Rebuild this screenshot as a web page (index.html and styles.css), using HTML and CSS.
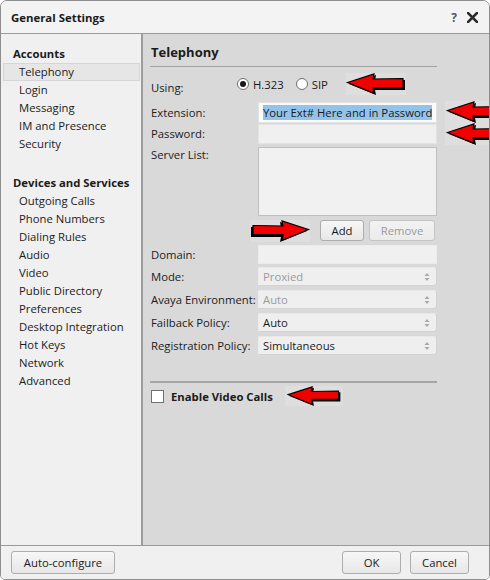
FILE: index.html
```html
<!DOCTYPE html>
<html>
<head>
<meta charset="utf-8">
<title>General Settings</title>
<link rel="stylesheet" href="styles.css">
</head>
<body>
<svg class="defs" width="0" height="0" aria-hidden="true">
  <symbol id="arrow" viewBox="0 0 60 22">
    <path d="M3,11 L30,2 L29,8 L59,7 L59,17 L29,17 L30,22 Z" fill="#000"/>
    <path d="M1.5,9.5 L28,1 L27,6 L57,5.5 L57,14.5 L27,14.5 L27.5,20 Z" fill="#f20000" stroke="#000" stroke-width="1.2" stroke-linejoin="miter"/>
  </symbol>
  <symbol id="spin" viewBox="0 0 6 10">
    <path d="M3,1 L5.5,4 L0.5,4 Z M3,9 L5.5,6 L0.5,6 Z" fill="#a9a9a9"/>
  </symbol>
</svg>
<div class="window">
  <header class="titlebar">
    <span class="title">General Settings</span>
    <span class="tb-icons">
      <span class="help">?</span>
      <svg class="close" viewBox="0 0 10 10" width="11" height="11"><path d="M1,1 L9,9 M9,1 L1,9" stroke="#2b2b2b" stroke-width="2.4" stroke-linecap="square"/></svg>
    </span>
  </header>
  <div class="main">
    <nav class="sidebar">
      <div class="group">Accounts</div>
      <div class="item selected">Telephony</div>
      <div class="item">Login</div>
      <div class="item">Messaging</div>
      <div class="item">IM and Presence</div>
      <div class="item">Security</div>
      <div class="group group2">Devices and Services</div>
      <div class="item">Outgoing Calls</div>
      <div class="item">Phone Numbers</div>
      <div class="item">Dialing Rules</div>
      <div class="item">Audio</div>
      <div class="item">Video</div>
      <div class="item">Public Directory</div>
      <div class="item">Preferences</div>
      <div class="item">Desktop Integration</div>
      <div class="item">Hot Keys</div>
      <div class="item">Network</div>
      <div class="item">Advanced</div>
    </nav>
    <section class="pane">
      <h2 class="pane-title">Telephony</h2>
      <div class="row row-using">
        <span class="lbl lbl-using">Using:</span>
        <span class="radio checked"></span><span class="radio-text">H.323</span>
        <span class="radio"></span><span class="radio-text">SIP</span>
        <svg class="arrow arrow-using"><use href="#arrow"/></svg>
      </div>
      <div class="row row-ext">
        <span class="lbl">Extension:</span>
        <div class="ctl inp inp-ext"><span class="sel-text">Your Ext# Here and in Password</span></div>
        <svg class="arrow arrow-side"><use href="#arrow"/></svg>
      </div>
      <div class="row row-pwd">
        <span class="lbl">Password:</span>
        <div class="ctl inp"></div>
        <svg class="arrow arrow-side"><use href="#arrow"/></svg>
      </div>
      <div class="row row-list">
        <span class="lbl">Server List:</span>
        <div class="ctl listbox"></div>
      </div>
      <div class="row row-btns">
        <svg class="arrow arrow-add"><use href="#arrow"/></svg>
        <button class="btn btn-add">Add</button>
        <button class="btn btn-remove" disabled>Remove</button>
      </div>
      <div class="row row-domain">
        <span class="lbl">Domain:</span>
        <div class="ctl inp inp-domain"></div>
      </div>
      <div class="row row-sel first-sel">
        <span class="lbl">Mode:</span>
        <div class="ctl select disabled"><span>Proxied</span><svg class="spin"><use href="#spin"/></svg></div>
      </div>
      <div class="row row-sel">
        <span class="lbl">Avaya Environment:</span>
        <div class="ctl select disabled"><span>Auto</span><svg class="spin"><use href="#spin"/></svg></div>
      </div>
      <div class="row row-sel">
        <span class="lbl">Failback Policy:</span>
        <div class="ctl select"><span>Auto</span><svg class="spin"><use href="#spin"/></svg></div>
      </div>
      <div class="row row-sel">
        <span class="lbl">Registration Policy:</span>
        <div class="ctl select"><span>Simultaneous</span><svg class="spin"><use href="#spin"/></svg></div>
      </div>
      <div class="sep"></div>
      <div class="row row-check">
        <span class="checkbox"></span>
        <span class="check-text">Enable Video Calls</span>
        <svg class="arrow arrow-check"><use href="#arrow"/></svg>
      </div>
    </section>
  </div>
  <footer class="footer">
    <button class="btn btn-auto">Auto-configure</button>
    <span class="spacer"></span>
    <button class="btn btn-ok">OK</button>
    <button class="btn btn-cancel">Cancel</button>
  </footer>
</div>
</body>
</html>
```
FILE: styles.css
```css
html, body {
  margin: 0;
  padding: 0;
}
body {
  width: 490px;
  height: 580px;
  overflow: hidden;
  background: #ffffff;
  font-family: "Open Sans", "Noto Sans", sans-serif;
  font-size: 11.3px;
  color: #1b1b1b;
}
.defs {
  position: absolute;
  width: 0;
  height: 0;
  overflow: hidden;
}
.window {
  box-sizing: border-box;
  width: 490px;
  height: 580px;
  border: 1px solid #8e8e8e;
  border-radius: 7px 7px 5px 5px;
  background: #f0f0f0;
  display: flex;
  flex-direction: column;
  overflow: hidden;
}
.titlebar {
  height: 32px;
  flex: none;
  border-bottom: 1px solid #9a9a9a;
  background: #f3f3f3;
  display: flex;
  align-items: center;
  justify-content: space-between;
  padding: 0 11px 0 10px;
}
.title {
  font-weight: 700;
  font-size: 11.4px;
}
.tb-icons {
  display: flex;
  align-items: center;
  gap: 10px;
}
.help {
  font-weight: 700;
  color: #555;
  font-size: 12px;
}
.main {
  flex: 1;
  display: flex;
  min-height: 0;
}
.sidebar {
  width: 140px;
  flex: none;
  background: #f0f0f0;
  border-right: 2px solid #9c9c9c;
  padding-top: 11px;
  box-sizing: content-box;
  white-space: nowrap;
}
.group {
  font-weight: 700;
  line-height: 18px;
  padding-left: 12px;
}
.group2 {
  margin-top: 21px;
}
.item {
  line-height: 18px;
  padding-left: 18px;
}
.item.selected {
  margin: 0 1px 0 2px;
  padding-left: 15px;
  line-height: 16px;
  border: 1px solid #d6d6d6;
  background: #e6e6e6;
}
.pane {
  flex: 1;
  background: #d9d9d9;
  padding-left: 7px;
  position: relative;
  white-space: nowrap;
}
.pane-title {
  margin: 0;
  width: 287px;
  font-size: 13px;
  font-weight: 700;
  line-height: 18px;
  padding: 9px 0 5px 1px;
  box-sizing: border-box;
  border-bottom: 1px solid #a2a2a2;
}
.row {
  display: flex;
  align-items: center;
  position: relative;
}
.lbl {
  width: 108px;
  flex: none;
  padding-left: 1px;
  box-sizing: border-box;
  line-height: 16px;
}
.ctl {
  width: 179px;
  box-sizing: border-box;
  flex: none;
}
.row-using {
  margin-top: 5px;
  height: 24px;
}
.lbl-using {
  width: 87px;
  margin-top: 7px;
}
.radio {
  width: 12px;
  height: 12px;
  box-sizing: border-box;
  border: 1px solid #6f6f6f;
  border-radius: 50%;
  background: #fff;
  flex: none;
  display: flex;
  align-items: center;
  justify-content: center;
  margin-top: -1px;
}
.radio.checked::after {
  content: "";
  width: 6px;
  height: 6px;
  border-radius: 50%;
  background: #1a1a1a;
}
.radio-text {
  margin-left: 4px;
  margin-right: 12px;
}
.arrow {
  width: 60px;
  height: 22px;
  flex: none;
  background: #dedede;
}
.arrow-using {
  margin-left: 6px;
  margin-top: -1px;
}
.row-ext {
  margin-top: 6px;
}
.inp {
  height: 20px;
  background: #f0f0f0;
  border: 1px solid #e3e3e3;
}
.inp-ext {
  height: 21px;
  background: #fbfbfb;
  border: 1px solid #e2e2e2;
  padding: 1px 0 0 4px;
  line-height: 17px;
  overflow: hidden;
}
.sel-text {
  background: #94c3ea;
  color: #1b1b1b;
}
.arrow-side {
  position: absolute;
  left: 295px;
  top: -1px;
  width: 62px;
  height: 22px;
}
.row-pwd {
  margin-top: 1px;
}
.row-list {
  margin-top: 3px;
  align-items: flex-start;
}
.listbox {
  height: 69px;
  background: #f1f1f1;
  border: 1px solid #bfbfbf;
}
.row-btns {
  margin-top: 4px;
  padding-left: 100px;
  height: 21px;
}
.arrow-add {
  transform: scaleX(-1);
  margin-right: 10px;
  margin-top: 1px;
}
.btn {
  font-family: inherit;
  font-size: 11.3px;
  color: #1b1b1b;
  border: 1px solid #adadad;
  border-radius: 3px;
  background: linear-gradient(#f7f7f7, #e7e7e7);
  padding: 0;
  height: 21px;
  line-height: 18px;
}
.btn[disabled] {
  color: #9a9a9a;
  border-color: #c4c4c4;
  background: linear-gradient(#f2f2f2, #ebebeb);
}
.btn-add {
  width: 44px;
}
.btn-remove {
  width: 66px;
  margin-left: 5px;
}
.row-domain {
  margin-top: 4px;
}
.inp-domain {
  height: 19px;
  border-color: #ececec;
}
.row-sel {
  margin-top: 4px;
}
.row-sel.first-sel {
  margin-top: 3px;
}
.select {
  height: 19px;
  background: #efefef;
  border: 1px solid #d2d2d2;
  border-top-color: #e8e8e8;
  border-left-color: #ececec;
  border-radius: 0 3px 3px 0;
  display: flex;
  align-items: center;
  justify-content: space-between;
  padding: 0 6px 0 4px;
}
.select.disabled {
  color: #9b9b9b;
}
.spin {
  width: 6px;
  height: 10px;
}
.sep {
  width: 287px;
  height: 2px;
  background: #a6a6a6;
  margin-top: 26px;
}
.row-check {
  margin-top: 3px;
  height: 20px;
  padding-left: 1px;
}
.checkbox {
  width: 13px;
  height: 13px;
  box-sizing: border-box;
  border: 1px solid #707070;
  background: #fff;
  flex: none;
}
.check-text {
  font-weight: 700;
  margin-left: 7px;
}
.arrow-check {
  margin-left: 12px;
  width: 58px;
  height: 20px;
}
.footer {
  height: 33px;
  flex: none;
  border-top: 1px solid #9a9a9a;
  background: #f0f0f0;
  display: flex;
  align-items: center;
  padding: 0 20px 0 10px;
}
.spacer {
  flex: 1;
}
.btn-auto {
  width: 104px;
  height: 23px;
}
.btn-ok {
  width: 59px;
  height: 23px;
}
.btn-cancel {
  width: 59px;
  height: 23px;
  margin-left: 9px;
}
```
